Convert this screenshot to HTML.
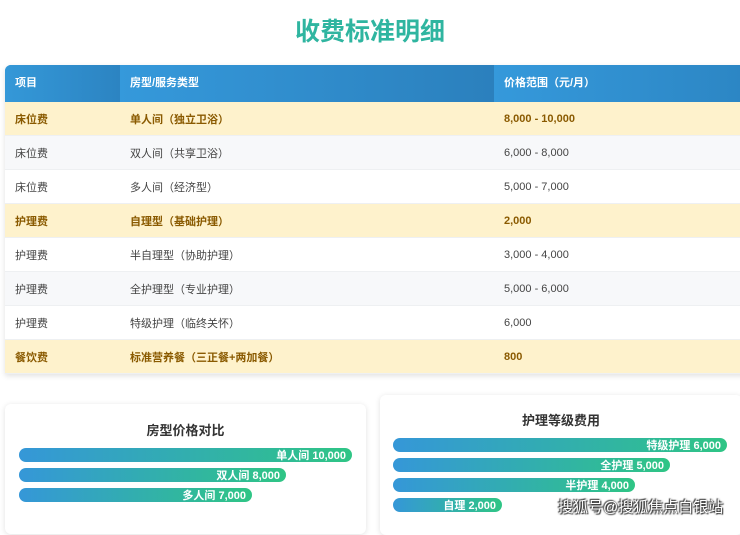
<!DOCTYPE html>
<html><head><meta charset="utf-8"><style>
*{margin:0;padding:0;box-sizing:border-box}
body{width:740px;height:523px;overflow:hidden;background:#fff;font-family:"Liberation Sans","Noto Sans CJK SC",sans-serif;position:relative}
h1{position:absolute;top:12px;left:0;width:740px;text-align:center;font-size:25px;color:#2fb5a0;font-weight:bold}
.tbl{position:absolute;left:5px;top:65px;width:740px;border-radius:6px 6px 0 0;overflow:hidden;box-shadow:0 2px 6px rgba(0,0,0,.12)}
.row{height:34px;display:flex;align-items:center;font-size:11px;color:#444;border-bottom:1px solid #eef0f2}
.row div{padding-left:10px}
.c1{width:115px}.c2{width:374px}.c3{flex:1}
.hd{height:37px;background:linear-gradient(90deg,#3497d6,#2f87c4);color:#fff;font-weight:bold}
.hd .c1{background:linear-gradient(90deg,#3498d8,#2c84c2);height:37px;line-height:37px}
.hd .c2{background:linear-gradient(90deg,#3599db,#2b80bd);height:37px;line-height:37px}
.hd .c3{background:linear-gradient(90deg,#3599db,#2c86c4);height:37px;line-height:37px}
.y{background:#fef2cc;color:#8a5a00;font-weight:bold}
.g{background:#f7f8fa}
.w{background:#fff}
.card{position:absolute;background:#fff;border-radius:6px;box-shadow:0 1px 6px rgba(0,0,0,.12)}
.card h3{text-align:center;font-size:13px;color:#333;font-weight:bold}
.bar{position:absolute;height:14px;border-radius:7px;background:linear-gradient(90deg,#3597d8,#2fc585);color:#fff;font-weight:bold;font-size:11px;text-align:right;padding-right:6px;line-height:17px}
.wm{position:absolute;left:558px;top:496px;font-size:15px;color:#fff;text-shadow:0 0 2px #333,1px 1px 1px #333,-1px -1px 1px #333}
</style></head><body>
<h1>收费标准明细</h1>
<div class="tbl">
<div class="row hd"><div class="c1">项目</div><div class="c2">房型/服务类型</div><div class="c3">价格范围（元/月）</div></div>
<div class="row y"><div class="c1">床位费</div><div class="c2">单人间（独立卫浴）</div><div class="c3">8,000 - 10,000</div></div>
<div class="row g"><div class="c1">床位费</div><div class="c2">双人间（共享卫浴）</div><div class="c3">6,000 - 8,000</div></div>
<div class="row w"><div class="c1">床位费</div><div class="c2">多人间（经济型）</div><div class="c3">5,000 - 7,000</div></div>
<div class="row y"><div class="c1">护理费</div><div class="c2">自理型（基础护理）</div><div class="c3">2,000</div></div>
<div class="row w"><div class="c1">护理费</div><div class="c2">半自理型（协助护理）</div><div class="c3">3,000 - 4,000</div></div>
<div class="row g"><div class="c1">护理费</div><div class="c2">全护理型（专业护理）</div><div class="c3">5,000 - 6,000</div></div>
<div class="row w"><div class="c1">护理费</div><div class="c2">特级护理（临终关怀）</div><div class="c3">6,000</div></div>
<div class="row y"><div class="c1">餐饮费</div><div class="c2">标准营养餐（三正餐+两加餐）</div><div class="c3">800</div></div>
</div>
<div class="card" style="left:5px;top:404px;width:361px;height:130px">
<h3 style="margin-top:16px">房型价格对比</h3>
<div class="bar" style="left:14px;top:44px;width:333px">单人间 10,000</div>
<div class="bar" style="left:14px;top:64px;width:267px">双人间 8,000</div>
<div class="bar" style="left:14px;top:84px;width:233px">多人间 7,000</div>
</div>
<div class="card" style="left:380px;top:395px;width:362px;height:140px">
<h3 style="margin-top:15px">护理等级费用</h3>
<div class="bar" style="left:13px;top:43px;width:334px">特级护理 6,000</div>
<div class="bar" style="left:13px;top:63px;width:277px">全护理 5,000</div>
<div class="bar" style="left:13px;top:83px;width:242px">半护理 4,000</div>
<div class="bar" style="left:13px;top:103px;width:109px">自理 2,000</div>
</div>
<div class="wm">搜狐号@搜狐焦点白银站</div>
</body></html>
